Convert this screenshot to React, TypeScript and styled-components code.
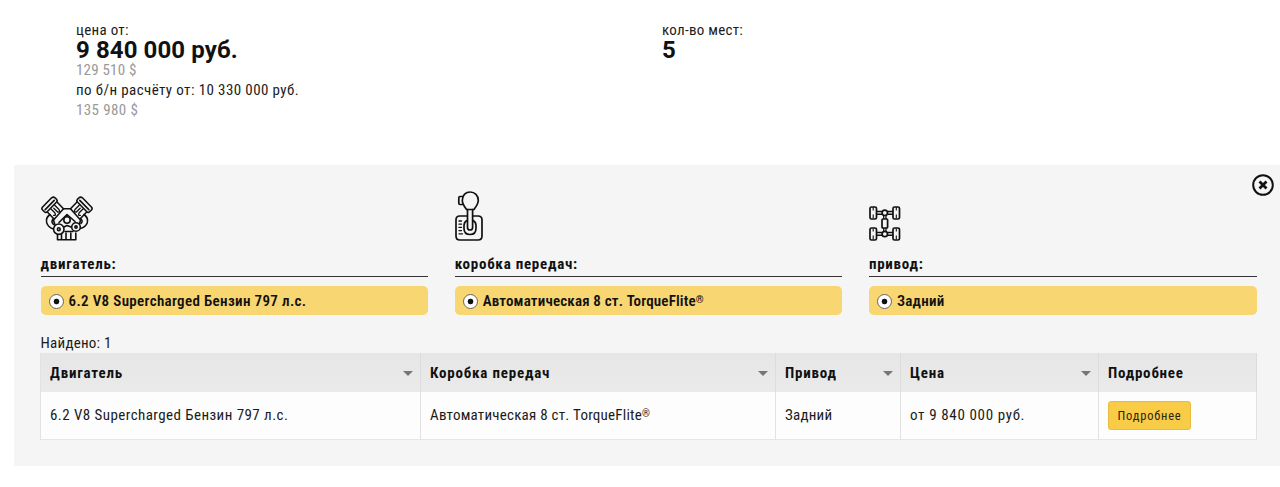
import React from 'react';
import styled, { createGlobalStyle } from 'styled-components';

const Global = createGlobalStyle`
  * { box-sizing: border-box; }
  body { margin: 0; background: #fff; }
`;

const Page = styled.div`
  width: 1280px;
  height: 487px;
  overflow: hidden;
  padding-top: 20px;
  font-family: Roboto, 'Open Sans', sans-serif;
  font-stretch: 80%;
  font-size: 15px;
  line-height: 20px;
  color: #1b1b1b;
  white-space: nowrap;
`;

const Summary = styled.section`
  display: grid;
  grid-template-columns: 586px 1fr;
  padding-left: 76px;
  height: 145px;
`;

const Line = styled.div<{ $spacing?: number; $muted?: boolean }>`
  letter-spacing: ${(p) => p.$spacing ?? 0.4}px;
  color: ${(p) => (p.$muted ? '#999' : '#1b1b1b')};
`;

const Big = styled.div`
  font-size: 24px;
  font-weight: 700;
  font-stretch: 88%;
  color: #111;
  letter-spacing: 0.1px;
`;

const Panel = styled.section`
  position: relative;
  margin-left: 14px;
  height: 301px;
  padding: 22px 23px 0 26.5px;
  background: #f5f5f5;
`;

const Close = styled.button`
  position: absolute;
  top: 8px;
  right: 5px;
  width: 24px;
  height: 24px;
  padding: 0;
  border: 0;
  background: none;
  svg { display: block; }
`;

const Filters = styled.div`
  display: grid;
  grid-template-columns: repeat(3, 387.8px);
  column-gap: 26.4px;
`;

const IconSlot = styled.div`
  height: 54px;
  display: flex;
  align-items: flex-end;
`;

const FilterTitle = styled.div`
  margin-top: 13px;
  height: 23px;
  border-bottom: 1px solid #333;
  font-weight: 700;
  color: #111;
  letter-spacing: 0.75px;
`;

const Option = styled.label<{ $spacing: number }>`
  margin-top: 9px;
  height: 29px;
  display: flex;
  align-items: center;
  gap: 5px;
  padding: 1px 0 0 8px;
  border-radius: 5px;
  background: #f8d672;
  font-weight: 600;
  color: #111;
  letter-spacing: ${(p) => p.$spacing}px;
`;

const Radio = styled.span`
  flex: none;
  width: 15px;
  height: 15px;
  border: 1px solid #666;
  border-radius: 50%;
  background: radial-gradient(circle, #111 2.5px, #fff 3.2px);
`;

const Registered = styled.span`
  font-size: 10px;
  line-height: 1;
  vertical-align: 3px;
  letter-spacing: 0;
`;

const Found = styled.div`
  margin-top: 17px;
  height: 21px;
  line-height: 22px;
  letter-spacing: 0.25px;
`;

const Table = styled.div`
  display: grid;
  grid-template-columns: 380px 355px 125px 198px 158px;
  width: 1217px;
  margin-left: -0.5px;
  border-left: 1px solid #e2e2e2;
`;

const Head = styled.div`
  height: 39px;
  display: flex;
  align-items: center;
  justify-content: space-between;
  padding: 0 7.5px 0 9px;
  border-right: 1px solid #dcdcdc;
  background: linear-gradient(#e6e6e6, #eaeaea);
  font-weight: 700;
  color: #111;
  letter-spacing: 0.8px;
`;

const Arrow = styled.i`
  margin-top: 1px;
  border: 5px solid transparent;
  border-top-color: #777;
  border-bottom: 0;
`;

const Cell = styled.div<{ $spacing?: number }>`
  height: 48px;
  display: flex;
  align-items: center;
  padding: 0 9px 2px;
  border-right: 1px solid #e2e2e2;
  border-bottom: 1px solid #e6e6e6;
  background: #fdfdfd;
  letter-spacing: ${(p) => p.$spacing ?? 0.4}px;
`;

const More = styled.button`
  width: 83px;
  height: 29px;
  margin-top: 2px;
  padding: 0;
  border: 1px solid #e8bb3a;
  border-radius: 3px;
  background: #f8cc46;
  font: inherit;
  font-size: 12.5px;
  color: #2b2412;
  letter-spacing: 0.8px;
`;

const EngineIcon = () => (
  <svg width="52" height="45" viewBox="0 0 52 45" fill="none" stroke="#111" strokeWidth="1.6" strokeLinejoin="round" strokeLinecap="round">
    <path d="M9 18.5 Q4.2 22 5.8 27 Q7.4 31.5 12.5 33 M12.5 22.5 Q9.5 25.5 12.5 28.5 M43 18.5 Q47.8 22 46.2 27 Q44.6 31 39.5 32.5 M39.5 22.5 Q42.5 25 40 27.5" />
    <path d="M16.5 6.5 L22.5 12.8 H29.5 L35.5 6.5 M6.8 16.5 L13 23 M45.2 16.5 L39 23" />
    <path d="M13.8 9.3 L18 13.5 Q19.5 16.5 16.6 16 L12.8 12.2 M10 13 L13.8 16.8 Q15.5 19.8 12.6 19.4 M38.2 9.3 L34 13.5 Q32.5 16.5 35.4 16 L39.2 12.2 M42 13 L38.2 16.8 Q36.5 19.8 39.4 19.4" strokeWidth="1.3" />
    <path d="M1.4 11.2 L10.6 1.8 Q12.4 .4 14 1.8 L15.6 3.4 Q16.8 4.8 15.6 6 L6.2 15.8 Q4.8 17.2 3.4 15.8 L1.6 14 Q.2 12.6 1.4 11.2Z M4.2 13.6 L13.2 4.4" />
    <path d="M50.6 11.2 L41.4 1.8 Q39.6 .4 38 1.8 L36.4 3.4 Q35.2 4.8 36.4 6 L45.8 15.8 Q47.2 17.2 48.6 15.8 L50.4 14 Q51.8 12.6 50.6 11.2Z M47.8 13.6 L38.8 4.4" />
    <path d="M22.5 12.8 L12.5 24 L14 29 M29.5 12.8 L39.5 24 L38.5 28 M18 26.5 L26 18.5 L34 25.5" />
    <path d="M23 31 L26 29.5 L30 31 M24 35.5 H32" />
    <circle cx="26" cy="24" r="3.2" fill="#f5f5f5" />
    <path d="M16.5 38 V43.8 H20.5 V38 M20.5 43.8 H25 V37 M25 43.8 H29.8 V37 M29.8 43.8 H34.8 V37" />
    <circle cx="17.8" cy="33.2" r="5.2" fill="#f5f5f5" />
    <circle cx="17.8" cy="33.2" r="1.4" />
    <circle cx="35" cy="31" r="4.3" fill="#f5f5f5" />
    <circle cx="35" cy="31" r="1.1" />
  </svg>
);

const GearboxIcon = () => (
  <svg width="28" height="50" viewBox="0 0 28 50" fill="none" stroke="#111" strokeWidth="1.7" strokeLinejoin="round" strokeLinecap="round">
    <path d="M11.5 18.5 C9 15 7.3 13 7.3 9.3 C7.3 4 10.8 1 15.2 1 C19.8 1 23.3 4.5 23.3 9.3 C23.3 13 21.5 15 19 18.5Z" />
    <path d="M8 5.5 H5 Q3.8 5.5 3.8 7 V12 Q3.8 13.5 5 13.5 H8.2" />
    <path d="M12.5 18.5 V36.5 Q12.5 39 15 39 Q17.6 39 17.6 36.5 V18.5" />
    <path d="M12 25 H4.8 Q1 25 1 28.8 V45 Q1 49 4.8 49 H23 Q27 49 27 45 V28.8 Q27 25 23 25 H18" />
    <path d="M12 29.5 Q9 31 9 34.5 V37.5 Q9 43.5 15 43.5 Q21 43.5 21 37.5 V34.5 Q21 31 18 29.5" />
    <path d="M4 30 H6.5 M4 33.2 H6.5 M4 36.4 H6.5 M4 39.6 H6.5 M4 42.8 H7.5" strokeWidth="1.3" />
  </svg>
);

const DriveIcon = () => (
  <svg width="32" height="35" viewBox="0 0.5 32 35" fill="none" stroke="#111" strokeWidth="1.7" strokeLinejoin="round">
    <rect x="1" y="1.5" width="6.5" height="12" rx="1.5" />
    <rect x="24" y="1.5" width="6.5" height="12" rx="1.5" />
    <rect x="1" y="22.5" width="6.5" height="12" rx="1.5" />
    <rect x="24" y="22.5" width="6.5" height="12" rx="1.5" />
    <path d="M4.2 1.5 V5 M4.2 9 V13 M27.3 1.5 V5 M27.3 9 V13 M4.2 23 V26 M4.2 30 V34 M27.3 23 V26 M27.3 30 V34" strokeWidth="1.1" />
    <path d="M7.5 6 H13 M18.5 6 H24 M7.5 8.8 H13 M18.5 8.8 H24 M7.5 27 H13 M18.5 27 H24 M7.5 29.8 H13 M18.5 29.8 H24" strokeWidth="1.4" />
    <circle cx="15.8" cy="7.3" r="2.7" />
    <circle cx="15.8" cy="28.5" r="2.7" />
    <rect x="13" y="13.5" width="5.6" height="9" rx="1" />
    <path d="M14.7 10 V13.5 M17 10 V13.5 M14.7 22.5 V26 M17 22.5 V26" strokeWidth="1.3" />
  </svg>
);

const torqueFlite = (
  <>
    Автоматическая 8 ст. TorqueFlite<Registered>®</Registered>
  </>
);

const filters = [
  { title: 'двигатель:', value: '6.2 V8 Supercharged Бензин 797 л.с.', icon: <EngineIcon />, spacing: 0.34 },
  { title: 'коробка передач:', value: torqueFlite, icon: <GearboxIcon />, spacing: 0.17 },
  { title: 'привод:', value: 'Задний', icon: <DriveIcon />, spacing: 0.3 },
];

const heads = ['Двигатель', 'Коробка передач', 'Привод', 'Цена'];

export default function App() {
  return (
    <Page>
      <Global />
      <Summary>
        <div>
          <Line $spacing={0.3}>цена от:</Line>
          <Big>9 840 000 руб.</Big>
          <Line $muted $spacing={0.2}>129 510 $</Line>
          <Line>по б/н расчёту от: 10 330 000 руб.</Line>
          <Line $muted>135 980 $</Line>
        </div>
        <div>
          <Line $spacing={0.27}>кол-во мест:</Line>
          <Big>5</Big>
        </div>
      </Summary>
      <Panel>
        <Close aria-label="Закрыть">
          <svg width="24" height="24" viewBox="0 0 24 24" fill="none" stroke="#111">
            <circle cx="12" cy="12" r="9.8" strokeWidth="2" />
            <path d="M8.5 8.5 L15.5 15.5 M15.5 8.5 L8.5 15.5" strokeWidth="2.8" />
          </svg>
        </Close>
        <Filters>
          {filters.map((f) => (
            <div key={f.title}>
              <IconSlot>{f.icon}</IconSlot>
              <FilterTitle>{f.title}</FilterTitle>
              <Option $spacing={f.spacing}>
                <Radio />
                <span>{f.value}</span>
              </Option>
            </div>
          ))}
        </Filters>
        <Found>Найдено: 1</Found>
        <Table>
          {heads.map((text) => (
            <Head key={text}>
              <span>{text}</span>
              <Arrow />
            </Head>
          ))}
          <Head>Подробнее</Head>
          <Cell $spacing={0.44}>6.2 V8 Supercharged Бензин 797 л.с.</Cell>
          <Cell $spacing={0.23}><span>{torqueFlite}</span></Cell>
          <Cell $spacing={0.25}>Задний</Cell>
          <Cell $spacing={0.65}>от 9 840 000 руб.</Cell>
          <Cell><More>Подробнее</More></Cell>
        </Table>
      </Panel>
    </Page>
  );
}
